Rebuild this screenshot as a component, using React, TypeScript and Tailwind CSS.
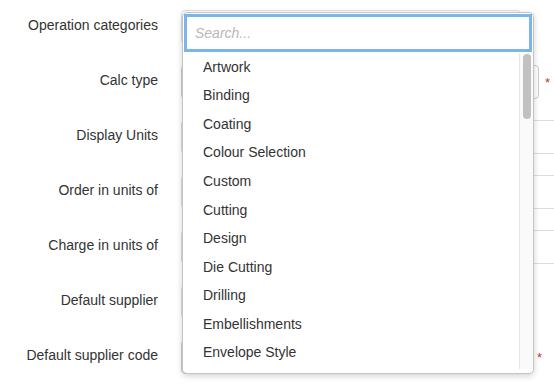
import { useState } from "react";

type Row = {
    label: string;
    required?: boolean;
    wide?: boolean;
};

const rows: Row[] = [
    { label: "Operation categories" },
    { label: "Calc type", required: true },
    { label: "Display Units", wide: true },
    { label: "Order in units of", wide: true },
    { label: "Charge in units of", wide: true },
    { label: "Default supplier" },
    { label: "Default supplier code", required: true },
];

const categories = [
    "Artwork",
    "Binding",
    "Coating",
    "Colour Selection",
    "Custom",
    "Cutting",
    "Design",
    "Die Cutting",
    "Drilling",
    "Embellishments",
    "Envelope Style",
];

const App = () => {
    const [search, setSearch] = useState("");

    const filtered = categories.filter((c) => c.toLowerCase().includes(search.toLowerCase()));

    return (
        <div
            className="relative w-[554px] h-[385px] overflow-hidden bg-white text-[#333] text-[14px]"
            style={{ fontFamily: '"Liberation Sans", Arial, sans-serif' }}
        >
            {/* form rows behind the open dropdown */}
            <div className="flex flex-col gap-[21px] pt-[10px]">
                {rows.map((row, index) => (
                    <div key={index} className="flex items-center h-[34px]">
                        <label className="w-[158px] shrink-0 text-right pb-[4px] leading-5 whitespace-nowrap">
                            {row.label}
                        </label>
                        <div className="flex items-center ml-[23px]">
                            {index === 6 ? (
                                <div className="w-[350px] h-[34px] border border-[#ccc] rounded-[4px] shrink-0" />
                            ) : row.required ? (
                                <div className="w-[358px] h-[34px] border border-[#ccc] rounded-[4px] shrink-0" />
                            ) : row.wide ? (
                                <div className="w-[420px] h-[34px] border border-[#ddd] rounded-[4px] shrink-0" />
                            ) : (
                                <div className="w-[340px] h-[34px] border border-[#ddd] rounded-[4px] shrink-0" />
                            )}
                            {row.required && (
                                <span className="text-[#c0392b] text-[13px] leading-none ml-[6px]">*</span>
                            )}
                        </div>
                    </div>
                ))}
            </div>

            {/* open dropdown */}
            <div className="absolute left-[182px] top-[12px] w-[352px] h-[362px] bg-white border border-[#c4c4c4] rounded-[5px] shadow-[0_2px_6px_rgba(0,0,0,0.18)] overflow-hidden">
                <div className="p-[1px]">
                    <input
                        value={search}
                        onChange={(e) => setSearch(e.target.value)}
                        placeholder="Search..."
                        className="w-full h-[38px] border-[3px] border-[#7ab6ec] px-[8px] italic text-[14px] text-[#333] placeholder:text-[#b8b8b8] outline-none"
                        style={{ fontFamily: '"Liberation Sans", Arial, sans-serif' }}
                    />
                </div>
                <div className="flex h-[320px]">
                    <ul className="flex-1 h-[318px] overflow-hidden">
                        {filtered.map((item) => (
                            <li key={item} className="h-[28.55px] flex items-center pl-[20px] text-[#333] cursor-pointer hover:bg-[#f2f2f2]">
                                {item}
                            </li>
                        ))}
                    </ul>
                    <div className="w-[14px] h-[316px] bg-[#fafafa] border-l border-[#e6e6e6] flex justify-center pt-[1px]">
                        <div className="w-[8px] h-[65px] bg-[#c1c1c1] rounded-full" />
                    </div>
                </div>
            </div>
        </div>
    );
};

export default App;
